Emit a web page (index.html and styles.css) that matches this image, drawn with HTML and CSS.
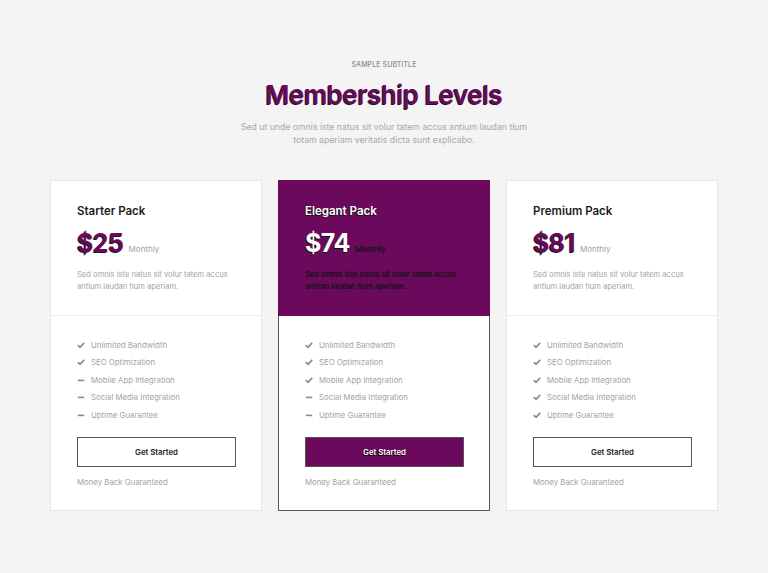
FILE: index.html
```html
<!DOCTYPE html>
<html>
<head>
<meta charset="utf-8">
<link rel="stylesheet" href="styles.css">
</head>
<body>
<section class="pricing">
  <header class="intro">
    <div class="subtitle">SAMPLE SUBTITLE</div>
    <h1 class="title">Membership Levels</h1>
    <p class="lead">Sed ut unde omnis iste natus sit volur tatem accus antium laudan tium<br>totam aperiam veritatis dicta sunt explicabo.</p>
  </header>
  <div class="cards">
    <div class="card">
      <div class="card-head">
        <h2 class="pack">Starter Pack</h2>
        <div class="price-row"><span class="price">$25</span><span class="period">Monthly</span></div>
        <p class="desc">Sed omnis iste natus sit volur tatem accus antium laudan tium aperiam.</p>
      </div>
      <div class="card-body">
        <ul class="features">
          <li><svg class="ic" viewBox="0 0 10 10"><path d="M1 5.2 L3.8 8 L9 2.3" /></svg>Unlimited Bandwidth</li>
          <li><svg class="ic" viewBox="0 0 10 10"><path d="M1 5.2 L3.8 8 L9 2.3" /></svg>SEO Optimization</li>
          <li><svg class="ic" viewBox="0 0 10 10"><path d="M1 5.5 H9" /></svg>Mobile App Integration</li>
          <li><svg class="ic" viewBox="0 0 10 10"><path d="M1 5.5 H9" /></svg>Social Media Integration</li>
          <li><svg class="ic" viewBox="0 0 10 10"><path d="M1 5.5 H9" /></svg>Uptime Guarantee</li>
        </ul>
        <a class="btn">Get Started</a>
        <div class="note">Money Back Guaranteed</div>
      </div>
    </div>
    <div class="card featured">
      <div class="card-head">
        <h2 class="pack">Elegant Pack</h2>
        <div class="price-row"><span class="price">$74</span><span class="period">Monthly</span></div>
        <p class="desc">Sed omnis iste natus sit volur tatem accus antium laudan tium aperiam.</p>
      </div>
      <div class="card-body">
        <ul class="features">
          <li><svg class="ic" viewBox="0 0 10 10"><path d="M1 5.2 L3.8 8 L9 2.3" /></svg>Unlimited Bandwidth</li>
          <li><svg class="ic" viewBox="0 0 10 10"><path d="M1 5.2 L3.8 8 L9 2.3" /></svg>SEO Optimization</li>
          <li><svg class="ic" viewBox="0 0 10 10"><path d="M1 5.2 L3.8 8 L9 2.3" /></svg>Mobile App Integration</li>
          <li><svg class="ic" viewBox="0 0 10 10"><path d="M1 5.5 H9" /></svg>Social Media Integration</li>
          <li><svg class="ic" viewBox="0 0 10 10"><path d="M1 5.5 H9" /></svg>Uptime Guarantee</li>
        </ul>
        <a class="btn">Get Started</a>
        <div class="note">Money Back Guaranteed</div>
      </div>
    </div>
    <div class="card">
      <div class="card-head">
        <h2 class="pack">Premium Pack</h2>
        <div class="price-row"><span class="price">$81</span><span class="period">Monthly</span></div>
        <p class="desc">Sed omnis iste natus sit volur tatem accus antium laudan tium aperiam.</p>
      </div>
      <div class="card-body">
        <ul class="features">
          <li><svg class="ic" viewBox="0 0 10 10"><path d="M1 5.2 L3.8 8 L9 2.3" /></svg>Unlimited Bandwidth</li>
          <li><svg class="ic" viewBox="0 0 10 10"><path d="M1 5.2 L3.8 8 L9 2.3" /></svg>SEO Optimization</li>
          <li><svg class="ic" viewBox="0 0 10 10"><path d="M1 5.2 L3.8 8 L9 2.3" /></svg>Mobile App Integration</li>
          <li><svg class="ic" viewBox="0 0 10 10"><path d="M1 5.2 L3.8 8 L9 2.3" /></svg>Social Media Integration</li>
          <li><svg class="ic" viewBox="0 0 10 10"><path d="M1 5.2 L3.8 8 L9 2.3" /></svg>Uptime Guarantee</li>
        </ul>
        <a class="btn">Get Started</a>
        <div class="note">Money Back Guaranteed</div>
      </div>
    </div>
  </div>
</section>
</body>
</html>
```
FILE: styles.css
```css
* { box-sizing: border-box; }
html, body { margin: 0; padding: 0; }
body {
  background: #f4f4f4;
  font-family: "Inter", "Noto Sans", sans-serif;
  color: #222;
  width: 768px;
  height: 573px;
  overflow: hidden;
}
.pricing {
  padding-top: 61px;
  display: flex;
  flex-direction: column;
  align-items: center;
}
.intro { text-align: center; }
.subtitle {
  font-size: 7px;
  color: #8a8a8a;
  letter-spacing: 0.1px;
  line-height: 8px;
  font-weight: 500;
}
.title {
  margin: 10px 0 0;
  font-size: 26px;
  line-height: 32px;
  font-weight: 600;
  color: #6b0a5c;
  letter-spacing: -0.5px;
  text-shadow: -1px 1px 0 #1d1d1d;
}
.lead {
  margin: 10px 0 0;
  font-size: 8.7px;
  line-height: 13px;
  color: #a8a8a8;
}
.cards {
  margin-top: 33px;
  display: flex;
  gap: 16px;
}
.card {
  width: 212px;
  height: 331px;
  background: #fff;
  border: 1px solid #e7e7e7;
  display: flex;
  flex-direction: column;
}
.card-head {
  height: 135px;
  padding: 23px 0 0 26px;
  border-bottom: 1px solid #ececec;
}
.pack {
  margin: 0;
  font-size: 11.5px;
  line-height: 14px;
  font-weight: 600;
  color: #1c1c1c;
}
.price-row {
  margin-top: 8px;
  display: flex;
  align-items: baseline;
  gap: 5px;
  height: 34px;
}
.price {
  font-size: 25px;
  line-height: 34px;
  font-weight: 700;
  color: #6b0a5c;
  letter-spacing: -0.5px;
  text-shadow: -1px 1px 0 #1d1d1d;
}
.period {
  font-size: 8px;
  color: #a0a0a0;
}
.desc {
  margin: 9px 0 0;
  width: 165px;
  font-size: 7.6px;
  line-height: 12px;
  color: #a3a3a3;
}
.card-body {
  padding: 20px 0 0 26px;
}
.features {
  list-style: none;
  margin: 0;
  padding: 0;
}
.features li {
  display: flex;
  align-items: center;
  height: 17.5px;
  font-size: 7.8px;
  color: #a3a3a3;
}
.ic {
  width: 8px;
  height: 8px;
  margin-right: 6px;
  flex: none;
  fill: none;
  stroke: #8a8a8a;
  stroke-width: 2;
}
.btn {
  display: flex;
  align-items: center;
  justify-content: center;
  margin-top: 13px;
  width: 159px;
  height: 30px;
  border: 1px solid #555;
  font-size: 7.8px;
  font-weight: 600;
  color: #1c1c1c;
}
.note {
  margin-top: 10px;
  font-size: 7.8px;
  color: #a3a3a3;
}
.featured {
  border-color: #5a5a5a;
}
.featured .card-head {
  background: #6b0a5c;
  margin: -1px -1px 0;
  padding: 24px 0 0 27px;
  height: 136px;
  border-bottom: none;
}
.featured .pack,
.featured .price {
  color: #fff;
  text-shadow: -1px 1px 0 #111;
}
.featured .period,
.featured .desc {
  color: #2a1a28;
  text-shadow: 0 0 0.6px #000;
}
.featured .btn {
  background: #6b0a5c;
  color: #fff;
  text-shadow: -1px 1px 0 #000;
}
```
